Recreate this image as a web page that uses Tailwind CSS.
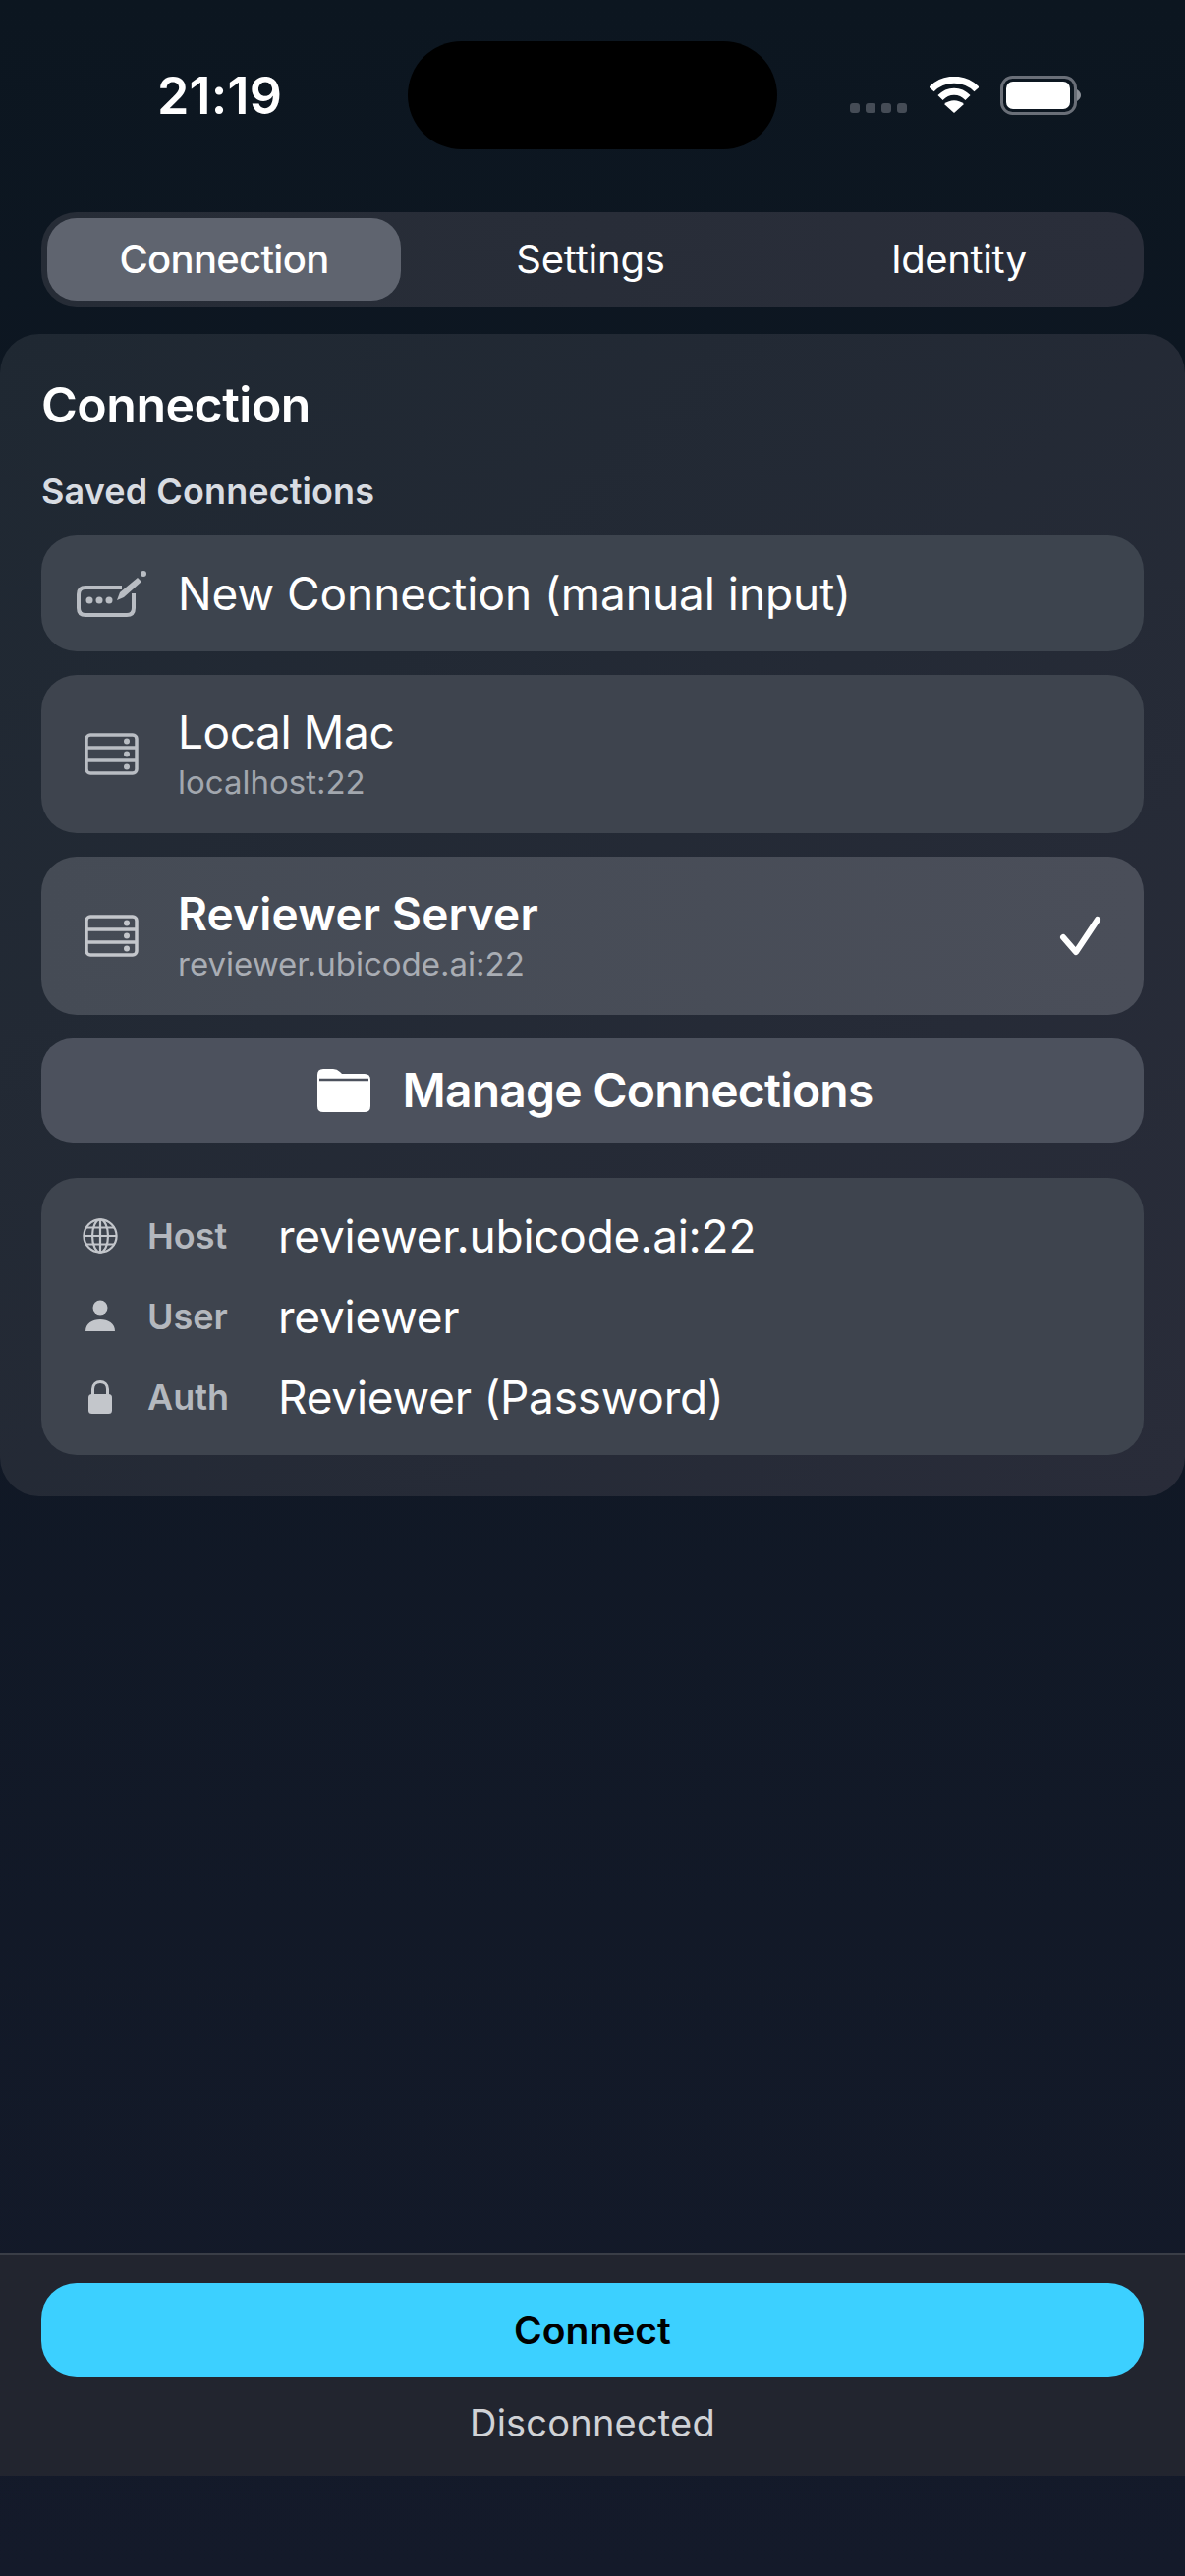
<!DOCTYPE html>
<html lang="en">
<head>
    <meta charset="UTF-8">
    <meta name="viewport" content="width=device-width, initial-scale=1.0">
    <title>Connection</title>
    <script src="https://cdn.jsdelivr.net/npm/@tailwindcss/browser@4"></script>
</head>
<body class="font-[Inter,sans-serif]">
<div class="w-[1206px] h-[2622px] overflow-hidden flex flex-col bg-linear-to-b from-[#0c1620] to-[#141a2a] text-white">

    <!-- status bar -->
    <div class="flex items-center mt-[42px] h-[110px]">
        <div class="w-[415px] pl-[160px] pt-[2px] text-[52px] leading-[60px] font-semibold tracking-[0.2px]">21:19</div>
        <div class="w-[376px] h-[110px] rounded-full bg-black"></div>
        <div class="flex items-center pl-[74px]">
            <div class="flex gap-[6px] mt-[25px]">
                <span class="w-[10px] h-[10px] rounded-[3px] bg-[#454c56]"></span>
                <span class="w-[10px] h-[10px] rounded-[3px] bg-[#454c56]"></span>
                <span class="w-[10px] h-[10px] rounded-[3px] bg-[#454c56]"></span>
                <span class="w-[10px] h-[10px] rounded-[3px] bg-[#454c56]"></span>
            </div>
            <svg class="ml-[23px]" width="50" height="38" viewBox="0 0 50 38" fill="none">
                <path d="M2 13 C14 0 36 0 48 13" stroke="#fff" stroke-width="7"/>
                <path d="M11 21.5 C19 13 31 13 39 21.5" stroke="#fff" stroke-width="7"/>
                <path d="M25 37 L15 28 C21 23 29 23 35 28 Z" fill="#fff"/>
            </svg>
            <svg class="ml-[22px]" width="82" height="40" viewBox="0 0 82 40" fill="none">
                <rect x="1.5" y="1.5" width="75" height="37" rx="11" stroke="#6a6f78" stroke-width="3"/>
                <rect x="6" y="6" width="65" height="28" rx="7" fill="#fff"/>
                <path d="M78 14 C81 16 82 18 82 20 C82 22 81 24 78 26 Z" fill="#8b8f97"/>
            </svg>
        </div>
    </div>

    <!-- tabs -->
    <div class="mt-[64px] mx-[42px] h-[96px] p-[6px] rounded-[36px] bg-linear-to-r from-[#262c36] to-[#2a2e3a] flex items-stretch text-[40px] leading-[48px]">
        <div class="w-[360px] rounded-[30px] bg-[#5f646f] flex items-center justify-center font-medium tracking-[-0.7px]">Connection</div>
        <div class="flex-1 pl-[11px] flex items-center justify-center tracking-[-0.2px]">Settings</div>
        <div class="flex-1 pl-[11px] flex items-center justify-center tracking-[-0.4px]">Identity</div>
    </div>

    <!-- connection panel -->
    <div class="mt-[28px] rounded-[40px] bg-linear-to-br from-[#1f2832] to-[#292c39] px-[42px] pt-[44px] pb-[42px]">
        <h2 class="text-[50px] leading-[56px] font-semibold tracking-[-0.5px]">Connection</h2>
        <div class="mt-[38px] text-[36px] leading-[44px] font-semibold tracking-[0.1px] text-[#d8dce2]">Saved Connections</div>

        <div class="mt-[23px] flex flex-col gap-[24px]">
            <div class="h-[118px] rounded-[36px] bg-[#3d444e] flex items-center pl-[4px]">
                <div class="w-[135px] flex justify-center">
                    <svg width="71" height="47" viewBox="0 0 71 47" fill="none">
                        <path d="M46 17 H9 Q2 17 2 24 V38 Q2 45 9 45 H51 Q58 45 58 38 V23" stroke="#b9bdc3" stroke-width="4"/>
                        <circle cx="13" cy="30" r="3.5" fill="#b9bdc3"/>
                        <circle cx="23" cy="30" r="3.5" fill="#b9bdc3"/>
                        <circle cx="33" cy="30" r="3.5" fill="#b9bdc3"/>
                        <path d="M41 30 L44 22 L62 7 L66 11 L48 27 Z" fill="#b9bdc3"/>
                        <circle cx="68" cy="3" r="3" fill="#b9bdc3"/>
                    </svg>
                </div>
                <span class="text-[46px] leading-[56px] tracking-[-0.05px]">New Connection (manual input)</span>
            </div>

            <div class="h-[161px] rounded-[36px] bg-[#3e444e] flex items-center pl-[4px]">
                <div class="w-[135px] flex justify-center">
                    <svg width="55" height="43" viewBox="0 0 55 43" fill="none" stroke="#b9bdc3" stroke-width="3.5">
                        <rect x="2" y="2" width="51" height="39" rx="4"/>
                        <path d="M2 15 H53 M2 28 H53"/>
                        <circle cx="43" cy="8.5" r="3" fill="#b9bdc3" stroke="none"/>
                        <circle cx="43" cy="21.5" r="3" fill="#b9bdc3" stroke="none"/>
                        <circle cx="43" cy="34.5" r="3" fill="#b9bdc3" stroke="none"/>
                    </svg>
                </div>
                <div>
                    <div class="text-[46px] leading-[56px] tracking-[-0.4px]">Local Mac</div>
                    <div class="text-[33px] leading-[46px] text-[#a2a7ae]">localhost:22</div>
                </div>
            </div>

            <div class="h-[161px] rounded-[36px] bg-linear-to-r from-[#454b55] to-[#4a4e59] flex items-center pl-[4px] pr-[42px]">
                <div class="w-[135px] flex justify-center">
                    <svg width="55" height="43" viewBox="0 0 55 43" fill="none" stroke="#c3c6cb" stroke-width="3.5">
                        <rect x="2" y="2" width="51" height="39" rx="4"/>
                        <path d="M2 15 H53 M2 28 H53"/>
                        <circle cx="43" cy="8.5" r="3" fill="#c3c6cb" stroke="none"/>
                        <circle cx="43" cy="21.5" r="3" fill="#c3c6cb" stroke="none"/>
                        <circle cx="43" cy="34.5" r="3" fill="#c3c6cb" stroke="none"/>
                    </svg>
                </div>
                <div class="flex-1">
                    <div class="text-[46px] leading-[56px] font-semibold tracking-[0.2px]">Reviewer Server</div>
                    <div class="text-[33px] leading-[46px] text-[#a9adb4]">reviewer.ubicode.ai:22</div>
                </div>
                <svg width="44" height="42" viewBox="0 0 44 42" fill="none">
                    <path d="M4 22 L17 37 L39 4" stroke="#fff" stroke-width="6" stroke-linecap="round" stroke-linejoin="round"/>
                </svg>
            </div>

            <div class="h-[106px] rounded-[32px] bg-[#4c515d] flex items-center justify-center gap-[32px] pl-[6px] text-[48px] leading-[56px] font-semibold tracking-[-0.8px]">
                <svg width="54" height="44" viewBox="0 0 54 44">
                    <path d="M0 6 Q0 0 6 0 H16 Q20 0 23 3 L25 5 H48 Q54 5 54 11 V38 Q54 44 48 44 H6 Q0 44 0 38 Z" fill="#fff"/>
                    <path d="M2 11 H52" stroke="#4c515d" stroke-width="2.5"/>
                </svg>
                <span>Manage Connections</span>
            </div>
        </div>

        <!-- selected connection details -->
        <div class="mt-[36px] rounded-[36px] bg-[#3e444e] pl-[42px] py-[18px]">
            <div class="h-[82px] flex items-center">
                <svg width="36" height="36" viewBox="0 0 36 36" fill="none" stroke="#c3c6cb" stroke-width="2.2">
                    <circle cx="18" cy="18" r="16.6"/>
                    <ellipse cx="18" cy="18" rx="8" ry="16.6"/>
                    <path d="M18 1.4 V34.6 M1.4 18 H34.6 M4 9.5 H32 M4 26.5 H32"/>
                </svg>
                <span class="ml-[30px] w-[133px] text-[36px] leading-[44px] font-semibold text-[#b4b8be]">Host</span>
                <span class="text-[46px] leading-[56px] tracking-[-0.25px]">reviewer.ubicode.ai:22</span>
            </div>
            <div class="h-[82px] flex items-center">
                <svg width="36" height="36" viewBox="0 0 36 36" fill="#c3c6cb">
                    <circle cx="18" cy="9" r="7.5"/>
                    <path d="M3 33 C3 25 10 21 18 21 C26 21 33 25 33 33 Z"/>
                </svg>
                <span class="ml-[30px] w-[133px] text-[36px] leading-[44px] font-semibold text-[#b4b8be]">User</span>
                <span class="text-[46px] leading-[56px] tracking-[-0.25px]">reviewer</span>
            </div>
            <div class="h-[82px] flex items-center">
                <svg width="36" height="36" viewBox="0 0 36 36" fill="none">
                    <path d="M10.5 17 V10 C10.5 0 25.5 0 25.5 10 V17" stroke="#c3c6cb" stroke-width="3"/>
                    <rect x="6" y="15" width="24" height="20" rx="3.5" fill="#c3c6cb"/>
                </svg>
                <span class="ml-[30px] w-[133px] text-[36px] leading-[44px] font-semibold text-[#b4b8be]">Auth</span>
                <span class="text-[46px] leading-[56px] tracking-[-0.25px]">Reviewer (Password)</span>
            </div>
        </div>
    </div>

    <div class="flex-1"></div>

    <!-- bottom bar -->
    <div class="h-[227px] border-t-2 border-[#3a3e47] bg-[#22252f] px-[42px] pt-[29px] flex flex-col items-center">
        <button class="w-full h-[95px] rounded-[36px] bg-[#3cd0ff] text-black text-[39px] leading-[46px] font-semibold">Connect</button>
        <div class="mt-[24px] text-[38px] leading-[46px] tracking-[0.2px] text-[#d0d2d6]">Disconnected</div>
    </div>
    <div class="h-[102px]"></div>
</div>
</body>
</html>
